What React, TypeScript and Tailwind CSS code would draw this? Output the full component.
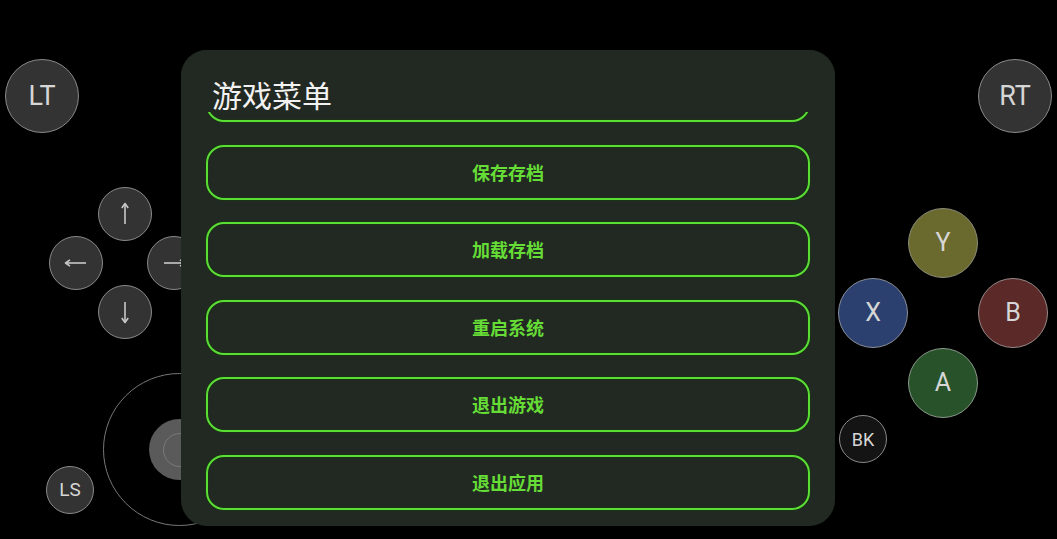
import React from "react";

function Arrow({ rot }: { rot: string }) {
  return (
    <svg width="24" height="24" viewBox="-12 -12 24 24" className={rot}>
      <line x1="0" y1="-10" x2="0" y2="10" stroke="#c8c8c8" strokeWidth="1.6" />
      <path d="M-3.2 -6 L0 -10.5 L3.2 -6" fill="none" stroke="#c8c8c8" strokeWidth="1.6" strokeLinejoin="round" />
    </svg>
  );
}

const dpadBtn =
  "w-[54px] h-[54px] -m-[2.5px] rounded-full bg-[#333333] border-[1.5px] border-[#8a8a8a] flex items-center justify-center";
const faceBtn =
  "w-[70px] h-[70px] rounded-full border-[1.5px] flex items-center justify-center text-[25px] text-[#d6d6d6]";
const trigger =
  "w-[74px] h-[74px] rounded-full bg-[#333333] border-[1.5px] border-[#8a8a8a] flex items-center justify-center text-[27px] text-[#d6d6d6]";
const small =
  "w-[48px] h-[48px] rounded-full border-[1.5px] border-[#8a8a8a] flex items-center justify-center text-[#d6d6d6]";

const items = ["快速存档", "保存存档", "加载存档", "重启系统", "退出游戏", "退出应用"];

export default function App() {
  return (
    <div className="relative w-[1057px] h-[539px] bg-black overflow-hidden font-['Roboto','Noto_Sans','Noto_Sans_CJK_SC',sans-serif]">
      {/* Left trigger */}
      <div className={`absolute left-[5px] top-[59px] ${trigger}`}>LT</div>

      {/* D-pad */}
      <div className="absolute left-[51.5px] top-[189.5px] grid grid-cols-[49px_49px_49px] grid-rows-[49px_49px_49px]">
        <div />
        <div className={dpadBtn}>
          <Arrow rot="rotate-0" />
        </div>
        <div />
        <div className={dpadBtn}>
          <Arrow rot="-rotate-90" />
        </div>
        <div />
        <div className={dpadBtn}>
          <Arrow rot="rotate-90" />
        </div>
        <div />
        <div className={dpadBtn}>
          <Arrow rot="rotate-180" />
        </div>
        <div />
      </div>

      {/* Joystick */}
      <div className="absolute left-[103px] top-[373px] w-[153px] h-[153px] rounded-full border-[1.5px] border-[#777777] flex items-center justify-center">
        <div className="w-[61px] h-[61px] rounded-full bg-[#5a5a5a] flex items-center justify-center">
          <div className="w-[34px] h-[34px] rounded-full border-[1.5px] border-[#7a7a7a]" />
        </div>
      </div>
      <div className={`absolute left-[46px] top-[466px] bg-[#333333] text-[19px] ${small}`}>LS</div>

      {/* Right trigger */}
      <div className={`absolute left-[978px] top-[59px] ${trigger}`}>RT</div>

      {/* Face buttons */}
      <div className="absolute left-[838px] top-[208px] grid grid-cols-[70px_70px_70px] grid-rows-[70px_70px_70px]">
        <div />
        <div className={`${faceBtn} bg-[#6b6a2e] border-[#8c8c7a]`}>Y</div>
        <div />
        <div className={`${faceBtn} bg-[#2b406f] border-[#8a8f9a]`}>X</div>
        <div />
        <div className={`${faceBtn} bg-[#5a2928] border-[#9a8a8a]`}>B</div>
        <div />
        <div className={`${faceBtn} bg-[#27522a] border-[#8a9a8a]`}>A</div>
        <div />
      </div>
      <div className={`absolute left-[839px] top-[415px] bg-[#141414] text-[18px] ${small}`}>BK</div>

      {/* Dialog */}
      <div className="absolute left-[181px] top-[50px] w-[654px] h-[476px] rounded-[26px] bg-[#222922] flex flex-col overflow-hidden font-['Noto_Sans_CJK_SC','Noto_Sans',sans-serif]">
        <div className="h-[62px] shrink-0 pl-[31px] pt-[25px] text-[30px] leading-[38px] text-[#f2f2f2] relative z-10 bg-[#222922] whitespace-nowrap">
          游戏菜单
        </div>
        <div className="flex-1 overflow-hidden px-[25px]">
          <div className="flex flex-col gap-[22.5px] -mt-[45px]">
            {items.map((t) => (
              <div
                key={t}
                className="h-[55px] shrink-0 rounded-[18px] border-2 border-[#5ade35] flex items-center justify-center text-[18px] font-bold text-[#66dc36] shadow-[0_0_0_1px_rgba(20,60,10,0.6),inset_0_0_0_1px_rgba(20,60,10,0.5)]"
              >
                {t}
              </div>
            ))}
          </div>
        </div>
      </div>
    </div>
  );
}
